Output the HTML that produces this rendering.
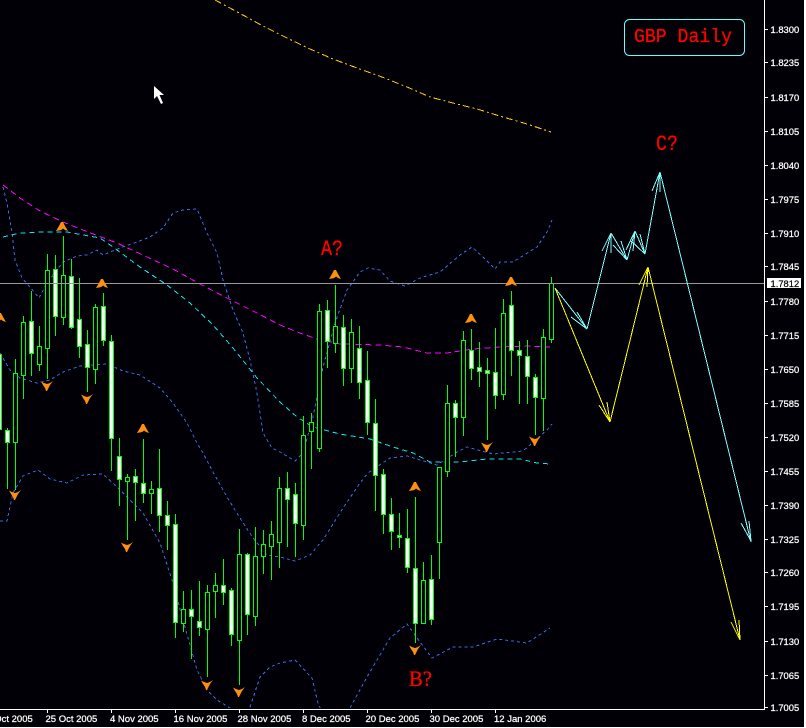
<!DOCTYPE html>
<html><head><meta charset="utf-8">
<style>
html,body{margin:0;padding:0;background:#fff;width:806px;height:728px;overflow:hidden}
svg{display:block}
.p{font:9.4px "Liberation Sans",sans-serif;fill:#fff;stroke:#fff;stroke-width:.25}
.d{font:9.5px "Liberation Sans",sans-serif;fill:#fff;stroke:#fff;stroke-width:.25}
.r{fill:#f00;stroke:#f00;stroke-width:.3}
</style></head><body>
<svg width="806" height="728" viewBox="0 0 806 728" xmlns="http://www.w3.org/2000/svg">
<defs>
<clipPath id="c"><rect x="0" y="0" width="764" height="708"/></clipPath>
<path id="u" d="M-1 -5L1 -5L3 -1L6 4L3 3L1 1.500L0 2.500L-1 3L-3 3.500L-6 4L-3 -1Z" fill="#ff8f0f"/>
<path id="v" d="M-6 -4.500L-3 -3L0 -2L3 -3L6 -5L3 -1L1 3L0 5L-1 5L-2 2L-4 -1Z" fill="#ff8f0f"/>
</defs>
<rect x="0" y="0" width="804" height="727" fill="#000006"/>
<g clip-path="url(#c)" shape-rendering="crispEdges" fill="none">
<path d="M215 0L230 8L263 26L287 38L310 49L333 59L357 68L382 77L407 87L430 97L453 103L477 109L503 117L527 124L551 132" stroke="#ffd000" stroke-dasharray="7 3 2 3"/>
<path d="M3 187L7 203L12 233L15 260L22 278L30 287L39 298L47 283L63 262L77 256L87 255L97 250L103 255L120 248L137 242L150 237L163 228L173 213L183 210L197 209L207 233L217 253L223 280L233 310L243 333L250 360L257 393L263 433L272 448L280 452L295 461L303 453L313 417L323 367L335 323L347 290L360 272L368 268L380 270L390 281L405 286L420 278L440 272L460 255L472 247L483 257L495 269L500 262L513 262L537 247L547 232L552 220" stroke="#4169e1" stroke-dasharray="3 3"/>
<path d="M0 353L10 370L20 378L37 383L50 380L63 372L80 366L107 364L123 371L140 375L160 388L173 403L187 423L197 443L203 453L213 472L227 497L240 518L253 538L267 555L280 557L295 561L310 555L323 540L343 508L360 483L368 473L390 458L407 456L427 462L437 465L457 452L467 447L493 454L523 451L547 430L552 424" stroke="#4169e1" stroke-dasharray="3 3"/>
<path d="M0 521L7 521L13 493L23 476L38 470L50 479L67 483L83 475L103 474L117 487L130 500L143 513L160 543L173 583L183 620L197 670L207 690L217 700L230 708L240 712L250 707L260 677L270 667L280 663L295 660L312 678L318 703L322 712L345 712L350 708L367 677L390 638L407 624L420 642L432 658L453 647L473 647L497 639L527 643L550 628" stroke="#4169e1" stroke-dasharray="3 3"/>
<path d="M3 237L20 233L43 232L67 232L100 238L113 247L140 267L167 285L190 303L213 325L233 348L257 378L280 402L297 417L313 427L340 434L370 439L393 447L413 453L430 462L460 462L487 459L520 459L537 463L550 464" stroke="#00f0f0" stroke-dasharray="5 4"/>
<path d="M3 185L20 198L40 211L63 222L93 234L117 243L147 257L173 269L200 284L227 298L257 313L280 325L300 333L317 339L340 344L380 345L403 347L427 353L447 353L473 349L500 347L527 346L550 347" stroke="#ff00ff" stroke-dasharray="6 4"/>
<path d="M-0.500 340V450M7.500 428V489M15.500 359V490M23.500 316V399M31.500 291V376M39.500 326V371M47.500 254V379M55.500 255V336M63.500 236V325M71.500 259V329M79.500 278V358M87.500 330V392M95.500 304V384M103.500 293V346M111.500 335V471M119.500 438V506M127.500 474V540M135.500 469V521M143.500 439V503M151.500 481V514M159.500 449V532M167.500 501V550M175.500 514V638M183.500 591V632M191.500 590V659M199.500 581V636M207.500 585V677M215.500 573V618M223.500 559V605M231.500 588V646M239.500 529V685M247.500 553V635M255.500 527V626M263.500 530V574M271.500 521V580M279.500 477V568M287.500 472V547M295.500 483V557M303.500 416V540M311.500 413V469M319.500 304V452M327.500 300V368M335.500 285V353M343.500 315V386M351.500 319V383M359.500 326V399M367.500 351V435M375.500 399V511M383.500 469V534M391.500 498V550M399.500 513V548M407.500 509V573M415.500 497V643M423.500 562V623M431.500 555V625M439.500 467V579M447.500 385V477M455.500 400V457M463.500 331V436M471.500 329V380M479.500 342V387M487.500 358V440M495.500 328V409M503.500 299V400M511.500 291V376M519.500 341V404M527.500 340V404M535.500 374V435M543.500 329V431M551.500 277V343" stroke="#00ff00"/>
<path fill="#000006" stroke="#00ff00" d="M13.500 373.500h4v69h-4zM21.500 322.500h4v53h-4zM37.500 346.500h4v18h-4zM45.500 270.500h4v78h-4zM61.500 275.500h4v42h-4zM93.500 307.500h4v62h-4zM125.500 477.500h4v4h-4zM149.500 489.500h4v4h-4zM181.500 609.500h4v14h-4zM205.500 592.500h4v37h-4zM213.500 585.500h4v6h-4zM237.500 554.500h4v86h-4zM253.500 556.500h4v60h-4zM261.500 544.500h4v12h-4zM269.500 534.500h4v12h-4zM277.500 488.500h4v54h-4zM301.500 435.500h4v90h-4zM309.500 422.500h4v9h-4zM317.500 311.500h4v137h-4zM333.500 326.500h4v17h-4zM349.500 332.500h4v36h-4zM421.500 580.500h4v43h-4zM437.500 467.500h4v75h-4zM445.500 403.500h4v68h-4zM461.500 340.500h4v77h-4zM501.500 313.500h4v81h-4zM541.500 337.500h4v61h-4zM549.500 283.500h4v56h-4z"/>
<path fill="#fff" stroke="#00ff00" d="M-2.500 354.500h4v75h-4zM5.500 430.500h4v12h-4zM29.500 321.500h4v32h-4zM53.500 269.500h4v47h-4zM69.500 276.500h4v51h-4zM77.500 319.500h4v27h-4zM85.500 344.500h4v23h-4zM101.500 306.500h4v34h-4zM109.500 341.500h4v97h-4zM117.500 456.500h4v23h-4zM133.500 476.500h4v6h-4zM141.500 483.500h4v10h-4zM157.500 488.500h4v27h-4zM165.500 515.500h4v10h-4zM173.500 524.500h4v98h-4zM189.500 609.500h4v7h-4zM197.500 621.500h4v6h-4zM221.500 585.500h4v7h-4zM229.500 590.500h4v44h-4zM245.500 554.500h4v60h-4zM285.500 488.500h4v11h-4zM293.500 494.500h4v29h-4zM325.500 310.500h4v31h-4zM341.500 327.500h4v41h-4zM357.500 348.500h4v34h-4zM365.500 380.500h4v42h-4zM373.500 423.500h4v52h-4zM381.500 474.500h4v40h-4zM389.500 514.500h4v17h-4zM397.500 535.500h4v2h-4zM405.500 538.500h4v29h-4zM413.500 568.500h4v55h-4zM429.500 579.500h4v40h-4zM453.500 403.500h4v14h-4zM469.500 350.500h4v18h-4zM477.500 367.500h4v4h-4zM485.500 370.500h4v3h-4zM493.500 372.500h4v23h-4zM509.500 305.500h4v45h-4zM517.500 350.500h4v5h-4zM525.500 356.500h4v20h-4zM533.500 377.500h4v20h-4z"/>
<path d="M0 283.500H764" stroke="#999"/>
<path d="M555 288L587 329M571 317L587 329M577 312L587 329M587 329L611 233M602 251L611 233M611 253L611 233M611 233L627 260M613 245L627 260M621 241L627 260M627 260L635 231M626 250L635 231M633 251L635 231M635 231L645 254M630 240L645 254M640 234L645 254M645 254L660 172M652 191L660 172M660 192L660 172M660 172L751 542M741 523L751 541M749 521L751 541" stroke="#80ffff"/>
<path d="M555 288L610 422M599 405L610 422M607 402L610 422M610 422L648 267M639 285L648 267M647 287L648 267M648 267L740 640M731 622L740 640M739 620L740 640" stroke="#ffff00"/>
</g>
<use href="#u" x="62" y="227"/><use href="#u" x="102" y="284"/><use href="#u" x="0" y="318"/><use href="#u" x="143" y="429"/><use href="#u" x="335" y="275"/><use href="#u" x="511" y="282"/><use href="#u" x="471" y="319"/><use href="#u" x="415" y="487"/>
<use href="#v" x="47" y="386"/><use href="#v" x="87" y="399"/><use href="#v" x="15" y="495"/><use href="#v" x="127" y="547"/><use href="#v" x="207" y="685"/><use href="#v" x="239" y="692"/><use href="#v" x="487" y="447"/><use href="#v" x="535" y="441"/><use href="#v" x="415" y="650"/>
<path d="M154 86V99L157 96L161 104L163 103L159.500 95H164Z" fill="#fff"/>
<rect x="624.500" y="19.500" width="120" height="36" rx="5" fill="none" stroke="#66ffff"/>
<text class="r" x="634" y="42" font-family="Liberation Mono" font-size="19" textLength="98" lengthAdjust="spacingAndGlyphs">GBP Daily</text>
<text class="r" x="321" y="255" font-family="Liberation Mono" font-size="22" textLength="22" lengthAdjust="spacingAndGlyphs">A?</text>
<text class="r" x="656" y="150" font-family="Liberation Mono" font-size="22" textLength="22" lengthAdjust="spacingAndGlyphs">C?</text>
<text class="r" x="409" y="686" font-family="Liberation Serif" font-size="22" textLength="23" lengthAdjust="spacingAndGlyphs">B?</text>
<path d="M764.500 0V709.500H0M765 29.500h3M765 62.500h3M765 97.500h3M765 131.500h3M765 165.500h3M765 199.500h3M765 233.500h3M765 266.500h3M765 301.500h3M765 335.500h3M765 369.500h3M765 403.500h3M765 437.500h3M765 471.500h3M765 505.500h3M765 539.500h3M765 572.500h3M765 606.500h3M765 641.500h3M765 675.500h3M765 707.500h3M47.500 710v3M111.500 710v3M175.500 710v3M239.500 710v3M303.500 710v3M367.500 710v3M431.500 710v3M495.500 710v3" stroke="#fff" fill="none" shape-rendering="crispEdges"/>
<text class="p" x="770.500" y="33">1.8300</text><text class="p" x="770.500" y="66">1.8235</text><text class="p" x="770.500" y="101">1.8170</text><text class="p" x="770.500" y="135">1.8105</text><text class="p" x="770.500" y="169">1.8040</text><text class="p" x="770.500" y="203">1.7975</text><text class="p" x="770.500" y="237">1.7910</text><text class="p" x="770.500" y="270">1.7845</text><text class="p" x="770.500" y="305">1.7780</text><text class="p" x="770.500" y="339">1.7715</text><text class="p" x="770.500" y="373">1.7650</text><text class="p" x="770.500" y="407">1.7585</text><text class="p" x="770.500" y="441">1.7520</text><text class="p" x="770.500" y="475">1.7455</text><text class="p" x="770.500" y="509">1.7390</text><text class="p" x="770.500" y="543">1.7325</text><text class="p" x="770.500" y="576">1.7260</text><text class="p" x="770.500" y="610">1.7195</text><text class="p" x="770.500" y="645">1.7130</text><text class="p" x="770.500" y="679">1.7065</text><text class="p" x="770.500" y="711">1.7005</text>
<rect x="767" y="278" width="34" height="10" fill="#fff"/>
<text x="770.500" y="287" style="font:9.4px 'Liberation Sans',sans-serif;fill:#000;stroke:#000;stroke-width:.2">1.7812</text>
<text class="d" x="-19" y="722">15 Oct 2005</text><text class="d" x="45.500" y="722">25 Oct 2005</text><text class="d" x="110" y="722">4 Nov 2005</text><text class="d" x="173.500" y="722">16 Nov 2005</text><text class="d" x="237.500" y="722">28 Nov 2005</text><text class="d" x="302" y="722">8 Dec 2005</text><text class="d" x="365.500" y="722">20 Dec 2005</text><text class="d" x="429.500" y="722">30 Dec 2005</text><text class="d" x="494" y="722">12 Jan 2006</text>
</svg>
</body></html>
